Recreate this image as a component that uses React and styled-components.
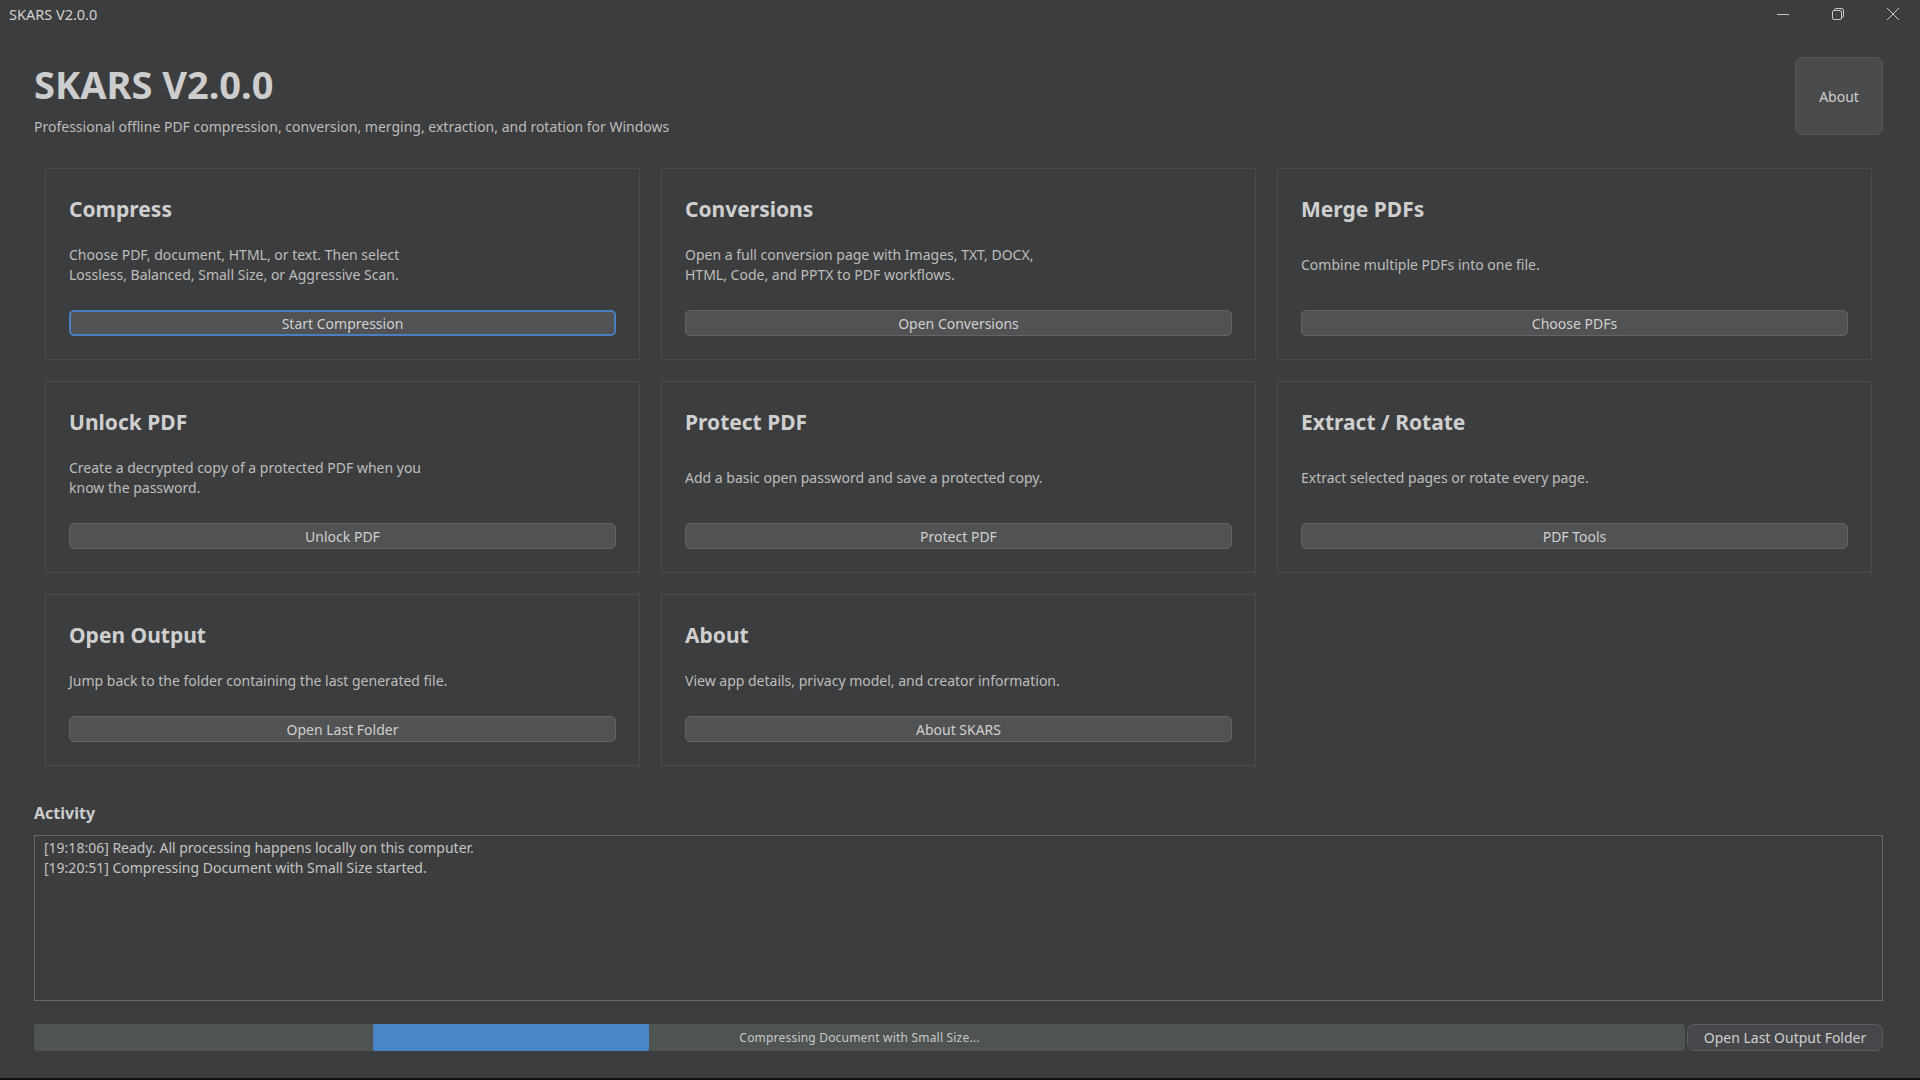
import React from 'react';
import styled, { createGlobalStyle } from 'styled-components';

const Global = createGlobalStyle`
  html, body { margin: 0; padding: 0; background: #3c3d3f; }
  body { font-family: "Noto Sans", "Open Sans", sans-serif; color: #c8c8c8; }
  * { box-sizing: border-box; }
`;

const Window = styled.div`
  height: 1080px;
  display: flex;
  flex-direction: column;
  background: #3c3d3f;
  border-bottom: 2px solid #101010;
  overflow: hidden;
`;

const TitleBar = styled.div`
  height: 27px;
  display: flex;
  align-items: center;
  padding-left: 9px;
  font-size: 14.5px;
  color: #d2d2d2;
`;

const Controls = styled.div`
  margin-left: auto;
  display: flex;
  height: 100%;
`;

const ControlButton = styled.div`
  width: 55px;
  height: 100%;
  display: flex;
  align-items: center;
  justify-content: center;
  color: #c8c8c8;
`;

const Content = styled.div`
  flex: 1;
  display: flex;
  flex-direction: column;
  padding: 0 37px 0 34px;
`;

const Header = styled.div`
  display: flex;
  justify-content: space-between;
  align-items: flex-start;
`;

const HeaderText = styled.div`
  padding-top: 35px;
`;

const AppTitle = styled.h1`
  margin: 0;
  font-size: 38px;
  line-height: 44px;
  font-weight: 700;
  color: #cdcdcd;
`;

const Subtitle = styled.div`
  margin-top: 11px;
  font-size: 14px;
  line-height: 20px;
  color: #bcbcbc;
`;

const AboutButton = styled.button`
  margin-top: 30px;
  width: 88px;
  height: 78px;
  border-radius: 7px;
  background: #4a4b4d;
  border: 1px solid #58595c;
  color: #cfcfcf;
  font-family: inherit;
  font-size: 14px;
`;

const Grid = styled.div`
  margin-top: 31px;
  padding: 0 11px;
  display: grid;
  grid-template-columns: repeat(3, 1fr);
  gap: 21px;
`;

const Card = styled.div`
  border: 1px solid #484b4f;
  padding: 24px 23px 23px 23px;
  display: flex;
  flex-direction: column;
`;

const CardTitle = styled.div`
  font-size: 21px;
  line-height: 32px;
  font-weight: 700;
  color: #cfcfcf;
`;

const CardDesc = styled.div`
  flex: 1;
  display: flex;
  align-items: center;
  margin: 20px 0 25px;
  font-size: 14px;
  line-height: 20px;
  color: #bdbdbd;
  white-space: pre-line;
`;

const CardButton = styled.button`
  height: 26px;
  width: 100%;
  border-radius: 5px;
  background: #505254;
  border: ${p => (p.$focused ? '2px solid #4a7ec0' : '1px solid #626467')};
  color: #d0d0d0;
  font-family: inherit;
  font-size: 14px;
  padding: 0;
`;

const SectionLabel = styled.div`
  margin-top: 36px;
  font-size: 16px;
  line-height: 22px;
  font-weight: 700;
  color: #cdcdcd;
`;

const LogBox = styled.div`
  margin-top: 11px;
  height: 166px;
  border: 1px solid #686868;
  padding: 2px 9px;
  font-size: 14px;
  line-height: 20px;
  color: #c4c4c4;
`;

const ProgressRow = styled.div`
  margin-top: 23px;
  height: 27px;
  display: flex;
  gap: 2px;
`;

const ProgressTrack = styled.div`
  position: relative;
  flex: 1;
  background: #4f5453;
  border-radius: 3px;
  display: flex;
  align-items: center;
  justify-content: center;
  overflow: hidden;
`;

const ProgressChunk = styled.div`
  position: absolute;
  top: 0;
  bottom: 0;
  background: #4a85c7;
  border-radius: 2px;
`;

const ProgressText = styled.span`
  position: relative;
  font-size: 12px;
  letter-spacing: 0.2px;
  color: #c8c8c8;
`;

const FolderButton = styled.button`
  width: 196px;
  height: 27px;
  border-radius: 7px;
  background: #45474a;
  border: 1px solid #5c5e61;
  color: #d0d0d0;
  font-family: inherit;
  font-size: 14px;
  padding: 0;
`;

const cards = [
  { title: 'Compress', desc: 'Choose PDF, document, HTML, or text. Then select\nLossless, Balanced, Small Size, or Aggressive Scan.', button: 'Start Compression', focused: true },
  { title: 'Conversions', desc: 'Open a full conversion page with Images, TXT, DOCX,\nHTML, Code, and PPTX to PDF workflows.', button: 'Open Conversions' },
  { title: 'Merge PDFs', desc: 'Combine multiple PDFs into one file.', button: 'Choose PDFs' },
  { title: 'Unlock PDF', desc: 'Create a decrypted copy of a protected PDF when you\nknow the password.', button: 'Unlock PDF' },
  { title: 'Protect PDF', desc: 'Add a basic open password and save a protected copy.', button: 'Protect PDF' },
  { title: 'Extract / Rotate', desc: 'Extract selected pages or rotate every page.', button: 'PDF Tools' },
  { title: 'Open Output', desc: 'Jump back to the folder containing the last generated file.', button: 'Open Last Folder' },
  { title: 'About', desc: 'View app details, privacy model, and creator information.', button: 'About SKARS' },
];

const MinIcon = () => (
  <svg width="14" height="14" viewBox="0 0 14 14"><path d="M1 7.5h12" stroke="currentColor" strokeWidth="1" /></svg>
);
const RestoreIcon = () => (
  <svg width="14" height="14" viewBox="0 0 14 14" fill="none" stroke="currentColor" strokeWidth="1">
    <rect x="1.5" y="3.5" width="9" height="9" rx="1.5" />
    <path d="M3.5 3.5V2.8c0-.7.6-1.3 1.3-1.3h6.4c.7 0 1.3.6 1.3 1.3v6.4c0 .7-.6 1.3-1.3 1.3h-.7" />
  </svg>
);
const CloseIcon = () => (
  <svg width="14" height="14" viewBox="0 0 14 14"><path d="M1 1l12 12M13 1L1 13" stroke="currentColor" strokeWidth="1" /></svg>
);

export default function App() {
  return (
    <>
      <Global />
      <Window>
        <TitleBar>
          SKARS V2.0.0
          <Controls>
            <ControlButton><MinIcon /></ControlButton>
            <ControlButton><RestoreIcon /></ControlButton>
            <ControlButton><CloseIcon /></ControlButton>
          </Controls>
        </TitleBar>
        <Content>
          <Header>
            <HeaderText>
              <AppTitle>SKARS V2.0.0</AppTitle>
              <Subtitle>Professional offline PDF compression, conversion, merging, extraction, and rotation for Windows</Subtitle>
            </HeaderText>
            <AboutButton>About</AboutButton>
          </Header>
          <Grid>
            {cards.map(c => (
              <Card key={c.title}>
                <CardTitle>{c.title}</CardTitle>
                <CardDesc>{c.desc}</CardDesc>
                <CardButton $focused={c.focused}>{c.button}</CardButton>
              </Card>
            ))}
          </Grid>
          <SectionLabel>Activity</SectionLabel>
          <LogBox>
            <div>[19:18:06] Ready. All processing happens locally on this computer.</div>
            <div>[19:20:51] Compressing Document with Small Size started.</div>
          </LogBox>
          <ProgressRow>
            <ProgressTrack>
              <ProgressChunk style={{ left: '339px', width: '276px' }} />
              <ProgressText>Compressing Document with Small Size...</ProgressText>
            </ProgressTrack>
            <FolderButton>Open Last Output Folder</FolderButton>
          </ProgressRow>
        </Content>
      </Window>
    </>
  );
}
